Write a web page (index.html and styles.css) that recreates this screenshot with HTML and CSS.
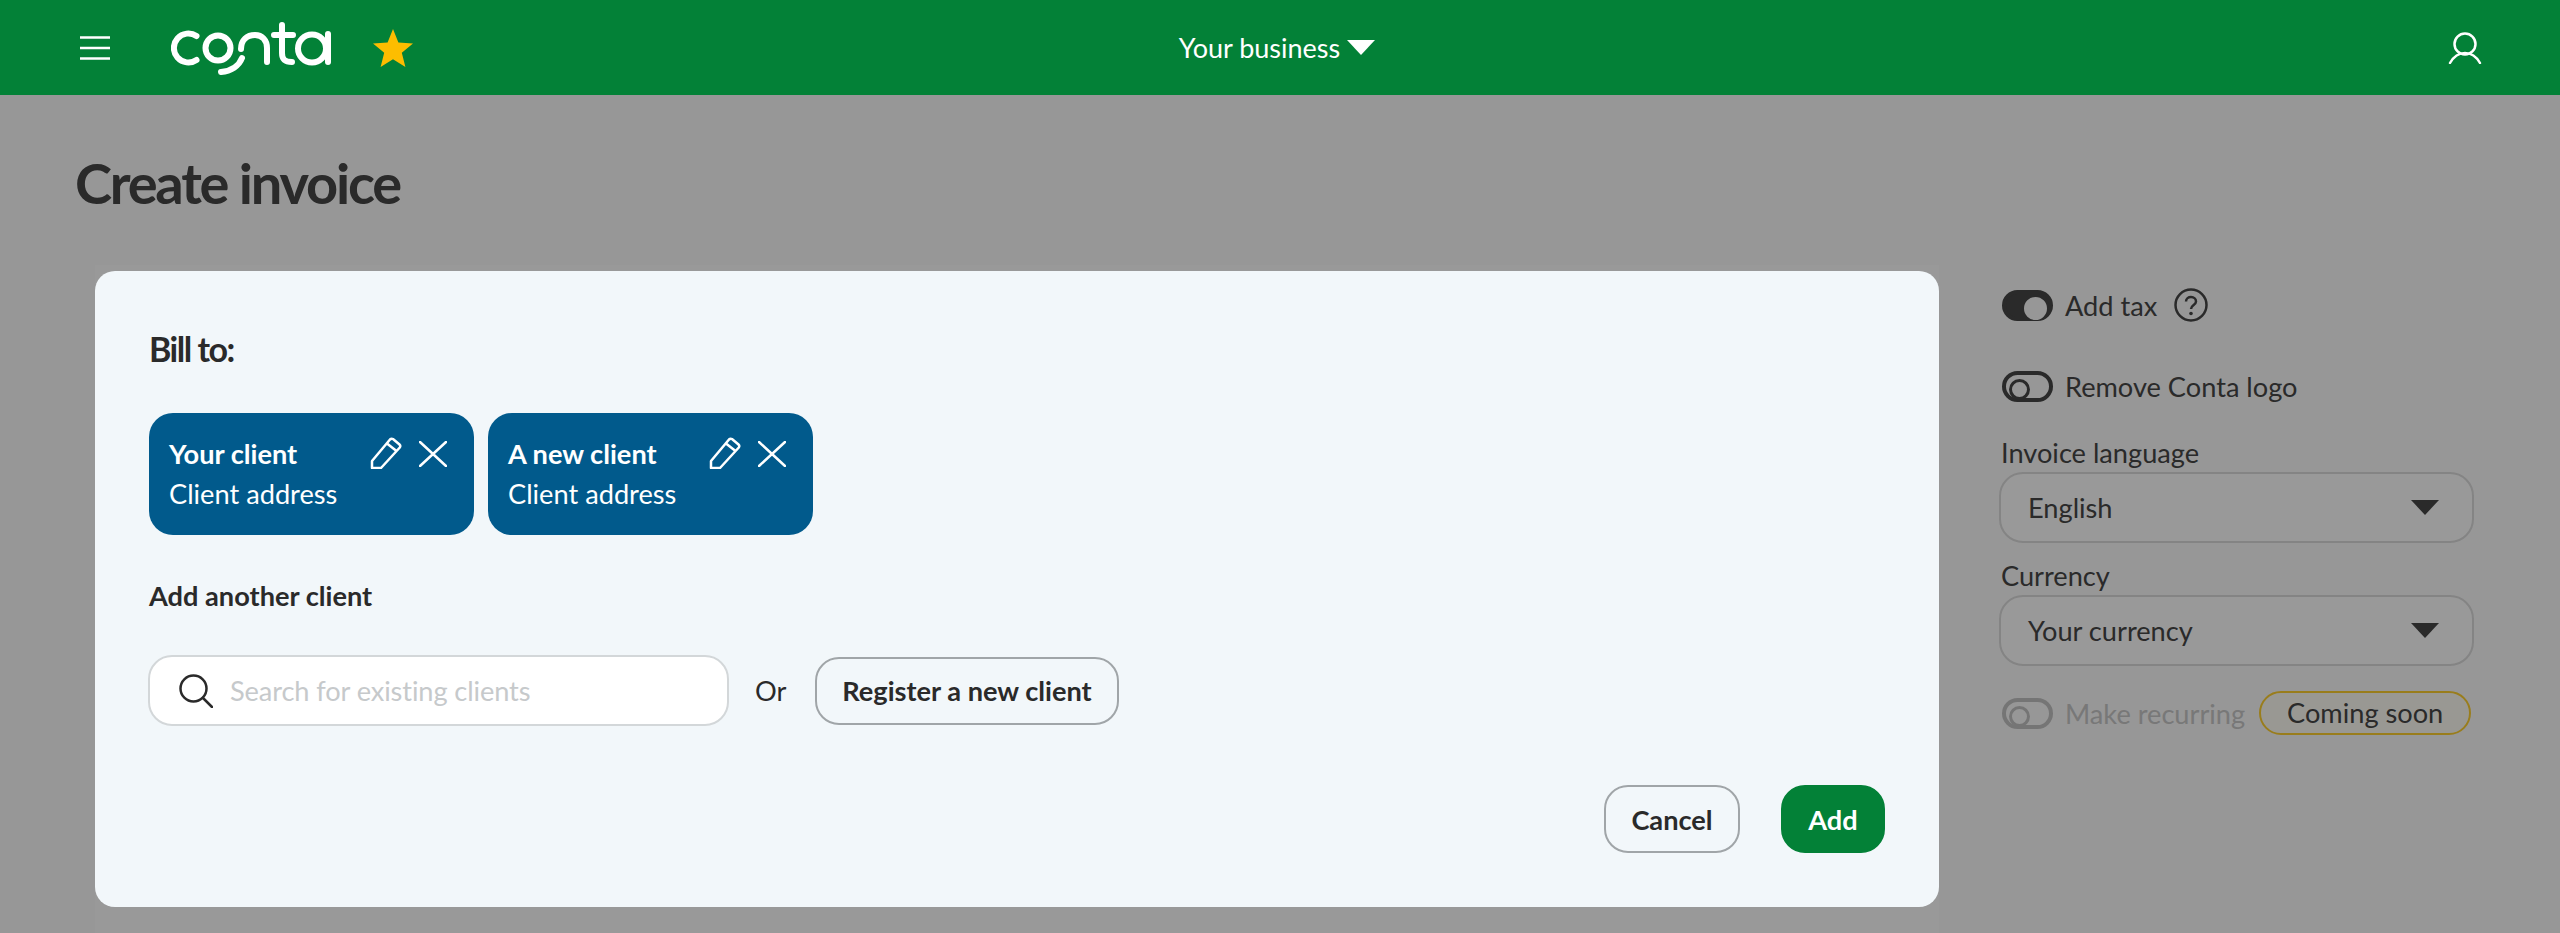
FILE: index.html
```html
<!DOCTYPE html>
<html lang="en">
<head>
<meta charset="utf-8">
<title>Create invoice</title>
<link rel="stylesheet" href="styles.css">
</head>
<body>
<header class="topbar">
  <div class="topbar-left">
    <svg class="burger" viewBox="0 0 30 24"><path d="M0 1.500H30M0 12H30M0 22.500H30"/></svg>
    <svg class="logo" viewBox="0 0 160 54">
      <path d="M25.500 15A14.500 14.500 0 1 0 25.500 39"/>
      <circle cx="47" cy="27" r="12.500"/>
      <path d="M50 51C60 50 68 45 71 37"/>
      <path d="M70 28C70 19 76 14 84 14C91 14 96 19 96 27V41"/>
      <path d="M111 4V32C111 39 114 41 121 41M103 14H122"/>
      <circle cx="141" cy="27.500" r="14"/>
      <path d="M157 13V41"/>
    </svg>
    <svg class="star" viewBox="0 0 40 38"><path d="M20 0L25.400 13.500L40 14.500L28.800 23.800L32.400 38L20 30.200L7.600 38L11.200 23.800L0 14.500L14.600 13.500Z"/></svg>
  </div>
  <div class="business">Your business<svg class="caret" viewBox="0 0 28 15"><path d="M0 0H28L14 15Z"/></svg></div>
  <div class="topbar-right"><svg class="user" viewBox="0 0 34 32"><circle cx="17" cy="12" r="10.500"/><path d="M2 31C6 24 11 21 17 21C23 21 28 24 32 31"/></svg></div>
</header>

<main class="page">
  <h1 class="title">Create invoice</h1>
  <div class="columns">
    <section class="card"></section>
    <aside class="side">
      <div class="opt">
        <span class="toggle toggle-on"></span><span>Add tax</span>
        <svg class="help" viewBox="0 0 34 34"><circle cx="17" cy="17" r="15.500"/><path d="M12 13.500C12 10.500 14.500 9 17 9C20 9 22 11 22 13.500C22 17 17 17 17 21"/><circle class="dot" cx="17" cy="25.500" r="1.800"/></svg>
      </div>
      <div class="opt opt-logo"><span class="toggle"></span><span>Remove Conta logo</span></div>
      <label class="field-label">Invoice language</label>
      <div class="select"><span>English</span><svg class="select-caret" viewBox="0 0 28 15"><path d="M0 0H28L14 15Z"/></svg></div>
      <label class="field-label field-label-second">Currency</label>
      <div class="select"><span>Your currency</span><svg class="select-caret" viewBox="0 0 28 15"><path d="M0 0H28L14 15Z"/></svg></div>
      <div class="opt opt-recurring">
        <span class="toggle toggle-off"></span><span class="muted">Make recurring</span>
        <span class="soon">Coming soon</span>
      </div>
    </aside>
  </div>
</main>

<div class="backdrop"></div>

<div class="modal">
  <h2 class="bill">Bill to:</h2>
  <div class="clients">
    <div class="client">
      <div class="client-text"><strong>Your client</strong><span>Client address</span></div>
      <svg class="pencil" viewBox="0 0 32 32"><path d="M2 24L20 2.500C21 1.500 22 1.500 23 2L29.500 7.500C30.500 8.500 30.500 9.500 29.800 10.500L11 31H2ZM17 6.500L26.500 14"/></svg>
      <svg class="close" viewBox="0 0 28 26"><path d="M1 1L27 25M27 1L1 25"/></svg>
    </div>
    <div class="client">
      <div class="client-text"><strong>A new client</strong><span>Client address</span></div>
      <svg class="pencil" viewBox="0 0 32 32"><path d="M2 24L20 2.500C21 1.500 22 1.500 23 2L29.500 7.500C30.500 8.500 30.500 9.500 29.800 10.500L11 31H2ZM17 6.500L26.500 14"/></svg>
      <svg class="close" viewBox="0 0 28 26"><path d="M1 1L27 25M27 1L1 25"/></svg>
    </div>
  </div>
  <h3 class="another">Add another client</h3>
  <div class="search-row">
    <div class="search">
      <svg class="search-icon" viewBox="0 0 34 34"><circle cx="14.500" cy="14.500" r="13"/><path d="M24 24L33 33"/></svg>
      <span class="placeholder">Search for existing clients</span>
    </div>
    <span class="or">Or</span>
    <button class="btn btn-register">Register a new client</button>
  </div>
  <div class="actions">
    <button class="btn btn-cancel">Cancel</button>
    <button class="btn btn-add">Add</button>
  </div>
</div>
</body>
</html>
```
FILE: styles.css
```css
* { box-sizing: border-box; }
html, body { margin: 0; height: 933px; overflow: hidden; }
body { background: #fcfcfc; font-family: Lato, "Liberation Sans", sans-serif; color: #464646; font-size: 27.200px; }

.topbar { position: relative; z-index: 3; height: 95px; background: #038137; display: grid; grid-template-columns: 1fr auto 1fr; align-items: center; padding: 0 78px 0 80px; color: #fff; }
.topbar-left { display: flex; align-items: center; }
.topbar-right { display: flex; justify-content: flex-end; }
.burger { width: 30px; height: 24px; fill: none; stroke: #fff; stroke-width: 2.500; margin-right: 61px; }
.logo { width: 160px; height: 54px; fill: none; stroke: #fff; stroke-width: 6; stroke-linecap: round; margin-right: 42px; }
.star { width: 40px; height: 38px; fill: #fdbd00; }
.business { display: flex; align-items: center; gap: 7px; font-size: 27px; margin-right: 8px; }
.caret { width: 28px; height: 15px; fill: #fff; }
.user { width: 34px; height: 32px; fill: none; stroke: #fff; stroke-width: 2.500; stroke-linecap: round; }

.page { padding: 0 0 0 75px; }
.title { margin: 0; padding-top: 54px; font-size: 56px; line-height: 68px; font-weight: 700; letter-spacing: -2.200px; height: 170px; }
.columns { display: flex; }
.card { width: 1844px; height: 700px; margin-left: 20px; background: #fff; }
.side { width: 480px; margin-left: 60px; padding-top: 23px; }

.opt { display: flex; align-items: center; height: 34px; }
.opt-logo { margin-top: 47px; }
.opt-recurring { margin-top: 25px; height: 44px; }
.toggle { width: 51px; height: 31px; border: 4px solid #464646; border-radius: 16px; margin: 0 12px 0 3px; position: relative; flex: none; }
.toggle::after { content: ""; position: absolute; left: 3px; top: 4px; width: 15px; height: 15px; border: 3px solid #464646; border-radius: 50%; }
.toggle-on { background: #464646; }
.toggle-on::after { left: auto; right: 2px; top: 3px; width: 17px; height: 17px; background: #fcfcfc; border-color: #fcfcfc; }
.toggle-off { border-color: #c4c4c4; }
.toggle-off::after { border-color: #c4c4c4; }
.help { width: 34px; height: 34px; margin-left: 17px; fill: none; stroke: #464646; stroke-width: 2.500; }
.help .dot { fill: #464646; stroke: none; }
.field-label { display: block; line-height: 34px; margin: 33px 0 2px 2px; }
.field-label-second { margin-top: 16px; }
.select { width: 475px; height: 71px; border: 2px solid #dcdcdc; border-radius: 24px; background: #fff; display: flex; align-items: center; justify-content: space-between; padding: 0 33px 0 27px; }
.select-caret { width: 28px; height: 15px; fill: #464646; }
.muted { color: #c8c8c8; }
.soon { margin-left: 14px; width: 212px; height: 44px; line-height: 40px; text-align: center; border: 2px solid #ffd030; border-radius: 22px; background: #fffef6; }

.backdrop { position: absolute; inset: 0; background: rgba(0, 0, 0, .4); z-index: 1; }

.modal { position: absolute; z-index: 2; left: 95px; top: 271px; width: 1844px; height: 636px; background: #f2f7fa; border-radius: 20px; padding: 58px 54px 0; color: #2a2a2a; }
.bill { margin: 0; font-size: 34px; line-height: 40px; font-weight: 700; letter-spacing: -1.500px; }
.clients { display: flex; gap: 14px; margin-top: 44px; }
.client { width: 325px; height: 122px; background: #015a8c; border-radius: 24px; color: #fff; display: flex; padding: 24px 27px 0 20px; align-items: flex-start; }
.client-text { flex: 1; display: flex; flex-direction: column; gap: 6px; line-height: 34px; }
.client-text strong { font-weight: 700; }
.pencil { width: 32px; height: 32px; fill: none; stroke: #fff; stroke-width: 2.500; stroke-linejoin: round; }
.close { width: 28px; height: 26px; margin: 4px 0 0 17px; fill: none; stroke: #fff; stroke-width: 2.500; stroke-linecap: round; }
.another { margin: 44px 0 0; font-size: 27.200px; line-height: 34px; font-weight: 700; }
.search-row { display: flex; align-items: center; margin-top: 42px; margin-left: -1px; }
.search { width: 581px; height: 71px; background: #fff; border: 2px solid #d3d7d9; border-radius: 24px; display: flex; align-items: center; padding-left: 29px; }
.search-icon { width: 34px; height: 34px; fill: none; stroke: #2a2a2a; stroke-width: 2.500; stroke-linecap: round; margin-right: 17px; }
.placeholder { color: #c6c9cb; letter-spacing: -.1px; }
.or { margin-left: 26px; width: 60px; }
.btn { font: 700 27.200px Lato, "Liberation Sans", sans-serif; border-radius: 24px; cursor: pointer; color: #2a2a2a; background: transparent; border: 2px solid #a0a5a8; height: 68px; padding: 0; }
.btn-register { width: 304px; }
.actions { display: flex; justify-content: flex-end; gap: 41px; margin-top: 59px; }
.btn-cancel { width: 136px; }
.btn-add { width: 104px; background: #038137; border-color: #038137; color: #fff; }
```
